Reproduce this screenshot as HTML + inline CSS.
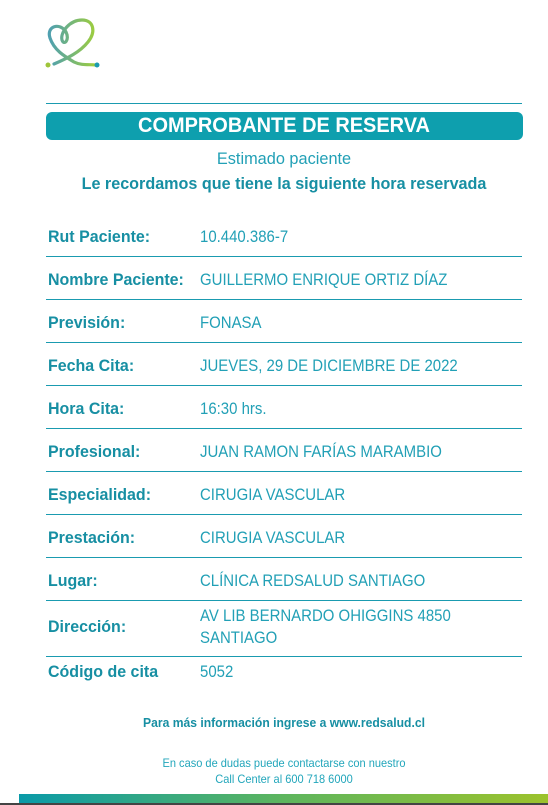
<!DOCTYPE html>
<html><head><meta charset="utf-8"><style>
body{margin:0;width:548px;height:805px;background:#fff;position:relative;overflow:hidden;font-family:"Liberation Sans",sans-serif;color:#1a9cb2}
.a{position:absolute;white-space:nowrap}
.l{left:48px;font-weight:bold;font-size:17px;color:#178fa3;transform:scaleX(0.94);transform-origin:0 0}
.v{left:200px;font-size:17px;color:#22a0b6;transform:scaleX(0.88);transform-origin:0 0}
.c{left:0;width:568px;text-align:center;transform-origin:284px 0}
.ln{position:absolute;left:46px;width:476px;height:1px;background:#1a9bb0}
</style></head><body>
<svg class="a" style="left:40px;top:14px" width="62" height="58" viewBox="0 0 62 58">
<defs><linearGradient id="g" x1="0" x2="1"><stop offset="0" stop-color="#4fa0b0"/><stop offset="1" stop-color="#9fce3c"/></linearGradient></defs>
<path d="M56 51 C50 50 42 52 34 48 C24 42 14 36 10 24 C6 12 20 8 26 18 C30 26 24 32 22 26 C20 18 30 6 42 6 C54 6 56 18 48 28 C40 38 28 44 14 50" fill="none" stroke="url(#g)" stroke-width="3.2" stroke-linecap="round"/>
<circle cx="8" cy="51" r="2.5" fill="#9fc53a"/><circle cx="57" cy="51" r="2.5" fill="#1a9bb0"/>
</svg>
<div class="ln" style="top:103px"></div>
<div class="a" style="left:46px;top:112px;width:477px;height:28px;background:#0e9fae;border-radius:6px"></div>
<div class="a c" style="top:112px;left:0;width:568px;color:#fff;font-weight:bold;font-size:21px;line-height:28px;transform:scaleX(0.95)">COMPROBANTE DE RESERVA</div>
<div class="a c" style="top:149px;font-size:17px;color:#22a0b6;transform:scaleX(0.96)">Estimado paciente</div>
<div class="a c" style="top:174px;font-size:17px;font-weight:bold;color:#178fa3;transform:scaleX(0.95)">Le recordamos que tiene la siguiente hora reservada</div>

<div class="a l" style="top:227px">Rut Paciente:</div><div class="a v" style="top:227px">10.440.386-7</div>
<div class="ln" style="top:256px"></div>
<div class="a l" style="top:270px">Nombre Paciente:</div><div class="a v" style="top:270px">GUILLERMO ENRIQUE ORTIZ DÍAZ</div>
<div class="ln" style="top:299px"></div>
<div class="a l" style="top:313px">Previsión:</div><div class="a v" style="top:313px">FONASA</div>
<div class="ln" style="top:342px"></div>
<div class="a l" style="top:356px">Fecha Cita:</div><div class="a v" style="top:356px">JUEVES, 29 DE DICIEMBRE DE 2022</div>
<div class="ln" style="top:385px"></div>
<div class="a l" style="top:399px">Hora Cita:</div><div class="a v" style="top:399px">16:30 hrs.</div>
<div class="ln" style="top:428px"></div>
<div class="a l" style="top:442px">Profesional:</div><div class="a v" style="top:442px">JUAN RAMON FARÍAS MARAMBIO</div>
<div class="ln" style="top:471px"></div>
<div class="a l" style="top:485px">Especialidad:</div><div class="a v" style="top:485px">CIRUGIA VASCULAR</div>
<div class="ln" style="top:514px"></div>
<div class="a l" style="top:528px">Prestación:</div><div class="a v" style="top:528px">CIRUGIA VASCULAR</div>
<div class="ln" style="top:557px"></div>
<div class="a l" style="top:571px">Lugar:</div><div class="a v" style="top:571px">CLÍNICA REDSALUD SANTIAGO</div>
<div class="ln" style="top:600px"></div>
<div class="a l" style="top:617px">Dirección:</div><div class="a v" style="top:605px;line-height:22px">AV LIB BERNARDO OHIGGINS 4850<br>SANTIAGO</div>
<div class="ln" style="top:656px"></div>
<div class="a l" style="top:662px">Código de cita</div><div class="a v" style="top:662px">5052</div>

<div class="a c" style="top:716px;font-size:12.5px;font-weight:bold;color:#178fa3;transform:scaleX(0.97)">Para más información ingrese a www.redsalud.cl</div>
<div class="a c" style="top:755px;font-size:12px;line-height:16px;color:#22a6bb;transform:scaleX(0.92)">En caso de dudas puede contactarse con nuestro<br>Call Center al 600 718 6000</div>
<div class="a" style="left:19px;top:794px;width:529px;height:10px;background:linear-gradient(90deg,#0a9aa8,#5db55e,#9cc22c)"></div>
<div class="a" style="left:0;top:803px;width:548px;height:2px;background:#444"></div>
</body></html>
